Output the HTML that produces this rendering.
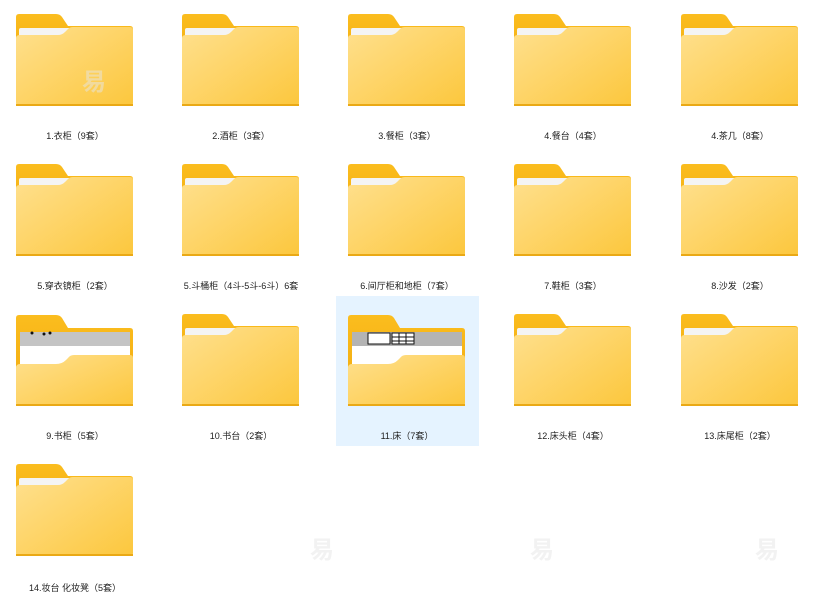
<!DOCTYPE html>
<html><head><meta charset="utf-8"><style>
html,body{margin:0;padding:0;background:#fff;width:821px;height:600px;overflow:hidden;position:relative;font-family:"Liberation Sans","Noto Sans CJK SC",sans-serif}
.it{position:absolute;width:150px;height:150px}
.it svg{position:absolute;left:0;top:0}
.lb{position:absolute;top:129px;left:-20px;width:190px;text-align:center;font-size:9px;color:#222;white-space:nowrap}
.sel{position:absolute;left:336px;top:296px;width:143px;height:150px;background:#e5f3ff}
.wm{position:absolute;font-size:24px;color:rgba(230,230,230,0.5);font-weight:bold}
</style></head><body>
<div class="sel"></div>
<svg width="0" height="0" style="position:absolute">
<defs>
<linearGradient id="fr" x1="0" y1="0" x2="1" y2="1"><stop offset="0" stop-color="#ffe08e"/><stop offset="1" stop-color="#fcc73d"/></linearGradient>
<linearGradient id="bk" x1="0" y1="0" x2="0" y2="1"><stop offset="0" stop-color="#fbbd1e"/><stop offset="1" stop-color="#f3ae12"/></linearGradient>
<symbol id="cf" viewBox="0 0 150 150">
<path d="M16 17 Q16 14 19 14 L56 14 Q60 14 62 17 L68 26 L130 26 Q133 26 133 29 L133 60 L16 60 Z" fill="url(#bk)"/>
<rect x="19" y="28" width="111" height="9" rx="2" fill="#f4f4f4"/>
<path d="M16 38 Q16 35 20 35 L58 35 Q62 35 65 32 L68 29 Q70 27 73 27 L130 27 Q133 27 133 30 L133 103 Q133 106 130 106 L19 106 Q16 106 16 103 Z" fill="url(#fr)"/>
<rect x="16" y="104" width="117" height="2" fill="#eaa915"/>
</symbol>
</defs></svg>

<div class="it" style="left:0;top:0"><svg width="150" height="150"><use href="#cf"/></svg><div class="wm" style="left:82px;top:62px">易</div><div class="lb">1.衣柜（9套）</div></div>
<div class="it" style="left:166px;top:0"><svg width="150" height="150"><use href="#cf"/></svg><div class="lb">2.酒柜（3套）</div></div>
<div class="it" style="left:332px;top:0"><svg width="150" height="150"><use href="#cf"/></svg><div class="lb">3.餐柜（3套）</div></div>
<div class="it" style="left:498px;top:0"><svg width="150" height="150"><use href="#cf"/></svg><div class="lb">4.餐台（4套）</div></div>
<div class="it" style="left:665px;top:0"><svg width="150" height="150"><use href="#cf"/></svg><div class="lb">4.茶几（8套）</div></div>

<div class="it" style="left:0;top:150px"><svg width="150" height="150"><use href="#cf"/></svg><div class="lb">5.穿衣镜柜（2套）</div></div>
<div class="it" style="left:166px;top:150px"><svg width="150" height="150"><use href="#cf"/></svg><div class="lb">5.斗桶柜（4斗-5斗-6斗）6套</div></div>
<div class="it" style="left:332px;top:150px"><svg width="150" height="150"><use href="#cf"/></svg><div class="lb">6.间厅柜和地柜（7套）</div></div>
<div class="it" style="left:498px;top:150px"><svg width="150" height="150"><use href="#cf"/></svg><div class="lb">7.鞋柜（3套）</div></div>
<div class="it" style="left:665px;top:150px"><svg width="150" height="150"><use href="#cf"/></svg><div class="lb">8.沙发（2套）</div></div>

<div class="it" style="left:0;top:300px"><svg width="150" height="150">
<path d="M16 18 Q16 15 19 15 L56 15 Q60 15 62 18 L68 28 L130 28 Q133 28 133 31 L133 80 L16 80 Z" fill="url(#bk)"/>
<rect x="20" y="32" width="110" height="14" fill="#c4c4c4"/>
<rect x="20" y="46" width="110" height="18" fill="#fff"/>
<circle cx="32" cy="33" r="1.5" fill="#111"/><circle cx="44" cy="34" r="1.5" fill="#111"/><circle cx="50" cy="33" r="1.5" fill="#111"/>
<path d="M16 68 Q16 64 20 64 L56 64 Q62 64 66 60 L68 58 Q70 55 74 55 L130 55 Q133 55 133 58 L133 103 Q133 106 130 106 L19 106 Q16 106 16 103 Z" fill="url(#fr)"/>
<rect x="16" y="104" width="117" height="2" fill="#eaa915"/>
</svg><div class="lb">9.书柜（5套）</div></div>
<div class="it" style="left:166px;top:300px"><svg width="150" height="150"><use href="#cf"/></svg><div class="lb">10.书台（2套）</div></div>
<div class="it" style="left:332px;top:300px"><svg width="150" height="150">
<path d="M16 18 Q16 15 19 15 L56 15 Q60 15 62 18 L68 28 L130 28 Q133 28 133 31 L133 80 L16 80 Z" fill="url(#bk)"/>
<rect x="20" y="32" width="110" height="14" fill="#b4b4b4"/>
<rect x="20" y="46" width="110" height="18" fill="#fff"/>
<rect x="36" y="33" width="22" height="11" fill="#fff" stroke="#111" stroke-width="1"/>
<rect x="60" y="33" width="22" height="11" fill="#fff" stroke="#111" stroke-width="1"/>
<path d="M60 37H82M60 41H82M67 33V44M74 33V44" stroke="#111" stroke-width="1"/>
<path d="M16 68 Q16 64 20 64 L56 64 Q62 64 66 60 L68 58 Q70 55 74 55 L130 55 Q133 55 133 58 L133 103 Q133 106 130 106 L19 106 Q16 106 16 103 Z" fill="url(#fr)"/>
<rect x="16" y="104" width="117" height="2" fill="#eaa915"/>
</svg><div class="lb">11.床（7套）</div></div>
<div class="it" style="left:498px;top:300px"><svg width="150" height="150"><use href="#cf"/></svg><div class="lb">12.床头柜（4套）</div></div>
<div class="it" style="left:665px;top:300px"><svg width="150" height="150"><use href="#cf"/></svg><div class="lb">13.床尾柜（2套）</div></div>

<div class="it" style="left:0;top:450px"><svg width="150" height="150"><use href="#cf"/></svg><div class="lb" style="top:131px">14.妆台 化妆凳（5套）</div></div>

<div class="wm" style="left:530px;top:530px">易</div>
<div class="wm" style="left:755px;top:530px">易</div>
<div class="wm" style="left:310px;top:530px">易</div>
</body></html>
